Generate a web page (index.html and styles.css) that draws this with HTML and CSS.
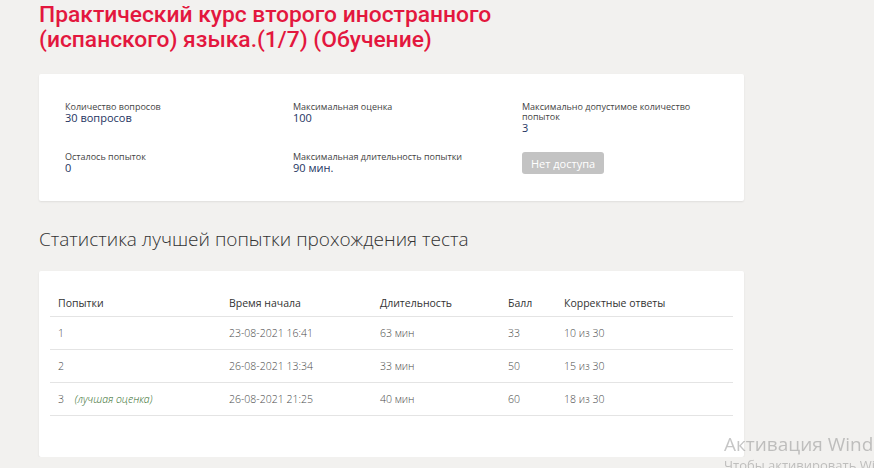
FILE: index.html
```html
<!DOCTYPE html>
<html lang="ru">
<head>
    <meta charset="UTF-8">
    <meta name="viewport" content="width=device-width, initial-scale=1.0">
    <title>Тест</title>
    <link rel="stylesheet" href="styles.css">
</head>
<body>
    <div class="page">
        <h1 class="course-title">Практический курс второго иностранного (испанского) языка.(1/7) (Обучение)</h1>

        <div class="card info-card">
            <div class="info-grid">
                <div class="info-item">
                    <div class="info-label">Количество вопросов</div>
                    <div class="info-value">30 вопросов</div>
                </div>
                <div class="info-item">
                    <div class="info-label">Максимальная оценка</div>
                    <div class="info-value">100</div>
                </div>
                <div class="info-item">
                    <div class="info-label">Максимально допустимое количество попыток</div>
                    <div class="info-value">3</div>
                </div>
                <div class="info-item">
                    <div class="info-label">Осталось попыток</div>
                    <div class="info-value">0</div>
                </div>
                <div class="info-item">
                    <div class="info-label">Максимальная длительность попытки</div>
                    <div class="info-value">90 мин.</div>
                </div>
                <div class="info-item">
                    <button class="btn-disabled" disabled>Нет доступа</button>
                </div>
            </div>
        </div>

        <h2 class="section-title">Статистика лучшей попытки прохождения теста</h2>

        <div class="card stats-card">
            <table class="stats-table">
                <thead>
                    <tr>
                        <th class="col-try">Попытки</th>
                        <th class="col-start">Время начала</th>
                        <th class="col-dur">Длительность</th>
                        <th class="col-score">Балл</th>
                        <th>Корректные ответы</th>
                    </tr>
                </thead>
                <tbody>
                    <tr>
                        <td>1</td>
                        <td>23-08-2021 16:41</td>
                        <td>63 мин</td>
                        <td>33</td>
                        <td>10 из 30</td>
                    </tr>
                    <tr>
                        <td>2</td>
                        <td>26-08-2021 13:34</td>
                        <td>33 мин</td>
                        <td>50</td>
                        <td>15 из 30</td>
                    </tr>
                    <tr>
                        <td>3 <span class="best">(лучшая оценка)</span></td>
                        <td>26-08-2021 21:25</td>
                        <td>40 мин</td>
                        <td>60</td>
                        <td>18 из 30</td>
                    </tr>
                </tbody>
            </table>
        </div>
    </div>

    <!-- водяной знак Windows -->
    <div class="activation">
        <div class="activation-title">Активация Windows</div>
        <div class="activation-text">Чтобы активировать Windows, перейдите в раздел "Параметры".</div>
    </div>
</body>
</html>
```

FILE: styles.css
```css
body {
    margin: 0;
    background: #f2f1ef;
    font-family: "Open Sans", Arial, sans-serif;
    color: #333;
    overflow: hidden;
}

.page {
    width: 705px;
    margin-left: 39px;
}

.course-title {
    margin: 2px 0 0;
    width: 500px;
    font-family: Roboto, "Open Sans", sans-serif;
    font-size: 22.8px;
    font-weight: 500;
    line-height: 25px;
    color: #e3173e;
}

.card {
    background: #fff;
    border-radius: 2px;
    box-shadow: 0 1px 2px rgba(0, 0, 0, 0.08);
}

.info-card {
    margin-top: 22px;
    padding: 28px 26px 27px;
}

.info-grid {
    display: grid;
    grid-template-columns: 228px 229px 200px;
    row-gap: 18px;
}

.info-label {
    font-size: 9px;
    line-height: 10px;
    color: #444;
}

.info-value {
    font-size: 11px;
    line-height: 12px;
    color: #1d3461;
}

.btn-disabled {
    display: block;
    width: 82px;
    height: 22px;
    padding: 0;
    border: none;
    border-radius: 3px;
    background: #c3c3c3;
    color: #fff;
    font-family: "Open Sans", Arial, sans-serif;
    font-size: 11px;
}

.section-title {
    margin: 26px 0 0;
    font-size: 19px;
    font-weight: 300;
    line-height: 24px;
    color: #333;
}

.stats-card {
    margin-top: 20px;
    padding: 14px 11px 41px;
}

.stats-table {
    width: 100%;
    border-collapse: collapse;
    font-size: 10.5px;
}

.stats-table th {
    padding: 11px 8px 6px;
    line-height: 14px;
    font-weight: 400;
    text-align: left;
    color: #333;
    border-bottom: 1px solid #e4e4e4;
}

.stats-table td {
    padding: 9px 8px;
    line-height: 14px;
    font-weight: 300;
    color: #4a4a4a;
    border-bottom: 1px solid #e4e4e4;
}

.col-try { width: 155px; }
.col-start { width: 135px; }
.col-dur { width: 112px; }
.col-score { width: 40px; }

.best {
    margin-left: 8px;
    font-size: 10.5px;
    font-style: italic;
    color: #2f6b1f;
}

.activation {
    position: fixed;
    left: 724px;
    top: 431px;
    white-space: nowrap;
    color: rgba(120, 120, 120, 0.42);
}

.activation-title {
    font-size: 19px;
    line-height: 26px;
}

.activation-text {
    font-size: 13px;
    line-height: 16px;
}
```
